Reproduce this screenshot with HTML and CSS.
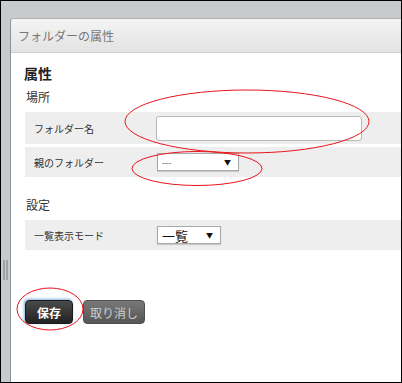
FILE: index.html
```html
<!DOCTYPE html>
<html lang="ja">
<head>
    <meta charset="UTF-8">
    <title>フォルダーの属性</title>
    <link rel="stylesheet" href="styles.css">
</head>
<body>
    <div class="screen">
        <div class="rail">
            <div class="grip"></div>
        </div>
        <div class="dialog">
            <div class="titlebar">フォルダーの属性</div>
            <div class="content">
                <h2 class="heading">属性</h2>
                <div class="section">場所</div>
                <div class="row row-tall">
                    <label class="label" for="folderName">フォルダー名</label>
                    <input class="text-input" type="text" id="folderName">
                </div>
                <div class="row">
                    <span class="label">親のフォルダー</span>
                    <div class="select select-parent"><span class="dash">---</span><span class="arrow">▼</span></div>
                </div>
                <div class="section section-gap">設定</div>
                <div class="row">
                    <span class="label">一覧表示モード</span>
                    <div class="select select-mode"><span class="mode">一覧</span><span class="arrow">▼</span></div>
                </div>
                <div class="buttons">
                    <button type="button" class="btn btn-save">保存</button>
                    <button type="button" class="btn btn-cancel">取り消し</button>
                </div>
            </div>
        </div>
        <svg class="marks" width="400" height="381" viewBox="1 1 400 381">
            <ellipse cx="247" cy="121.5" rx="122" ry="31.5"/>
            <ellipse cx="197" cy="168.5" rx="65" ry="17"/>
            <ellipse cx="50" cy="309" rx="33" ry="21"/>
        </svg>
    </div>
</body>
</html>
```

FILE: styles.css
```css
body {
    margin: 0;
    font-family: "Noto Sans CJK JP", "Liberation Sans", sans-serif;
    background-color: #fff;
}
.screen {
    position: relative;
    width: 402px;
    height: 383px;
    box-sizing: border-box;
    border: 1px solid #000;
    background-color: #c8cbce;
    display: grid;
    grid-template-columns: 9px 1fr;
    grid-template-rows: 17px 1fr;
    overflow: hidden;
}
.rail {
    grid-column: 1;
    grid-row: 1 / 3;
    padding-top: 259px;
    padding-left: 2px;
}
.grip {
    width: 5px;
    height: 20px;
    border-left: 2px solid #9ea2a6;
    border-right: 2px solid #9ea2a6;
    box-sizing: border-box;
}
.dialog {
    grid-column: 2;
    grid-row: 2;
    background-color: #fff;
    border-left: 1px solid #8e9194;
    border-top: 1px solid #b0b3b6;
    border-top-left-radius: 4px;
    display: flex;
    flex-direction: column;
}
.titlebar {
    height: 33px;
    line-height: 33px;
    padding-left: 7px;
    font-size: 12px;
    color: #777;
    background: linear-gradient(#f4f4f4, #e3e3e3);
    border-bottom: 1px solid #cfcfcf;
    border-top-left-radius: 4px;
}
.content {
    padding-left: 13px;
}
.heading {
    margin: 11px 0 0 0;
    font-size: 14px;
    line-height: 18px;
    font-weight: bold;
    color: #222;
}
.section {
    margin-top: 7px;
    padding-left: 2px;
    font-size: 12px;
    line-height: 16px;
    color: #333;
}
.section-gap {
    margin-top: 20px;
}
.row {
    margin: 7px 0 0 1px;
    height: 30px;
    background-color: #eeeeee;
    display: flex;
    align-items: center;
}
.row-tall {
    height: 32px;
}
.row-tall + .row {
    margin-top: 3px;
}
.label {
    width: 122px;
    padding-left: 9px;
    font-size: 10px;
    color: #333;
}
.text-input {
    width: 206px;
    height: 25px;
    box-sizing: border-box;
    margin: 1px 0 0 0;
    border: 1px solid #b8b8b8;
    border-radius: 3px;
    background-color: #fff;
}
.select {
    margin-left: 1px;
    box-sizing: border-box;
    background-color: #fff;
    border: 1px solid #a9a9a9;
    box-shadow: 0 1px 1px rgba(0,0,0,0.15);
    display: flex;
    align-items: center;
    justify-content: space-between;
    padding: 0 7px 0 4px;
}
.select-parent {
    width: 82px;
    height: 18px;
}
.select-mode {
    width: 64px;
    height: 18px;
}
.dash {
    font-size: 9px;
    color: #556;
}
.mode {
    font-size: 13px;
    color: #111;
}
.arrow {
    font-size: 7px;
    color: #111;
}
.buttons {
    margin: 50px 0 0 1px;
    display: flex;
    gap: 10px;
}
.btn {
    height: 24px;
    border-radius: 4px;
    padding: 0;
    font-family: "Noto Sans CJK JP", "Liberation Sans", sans-serif;
    cursor: pointer;
}
.btn-save {
    width: 48px;
    font-size: 12px;
    font-weight: bold;
    color: #fff;
    background: linear-gradient(#4a4a4a, #222);
    border: 1px solid #1b1b1b;
    box-shadow: -1px -1px 3px #7fb2dc;
}
.btn-cancel {
    width: 62px;
    font-size: 12px;
    color: #cfcfcf;
    background: linear-gradient(#787878, #565656);
    border: 1px solid #4e4e4e;
}
.marks {
    position: absolute;
    left: 0;
    top: 0;
    pointer-events: none;
}
.marks ellipse {
    fill: none;
    stroke: #e8141b;
    stroke-width: 1;
}
```
